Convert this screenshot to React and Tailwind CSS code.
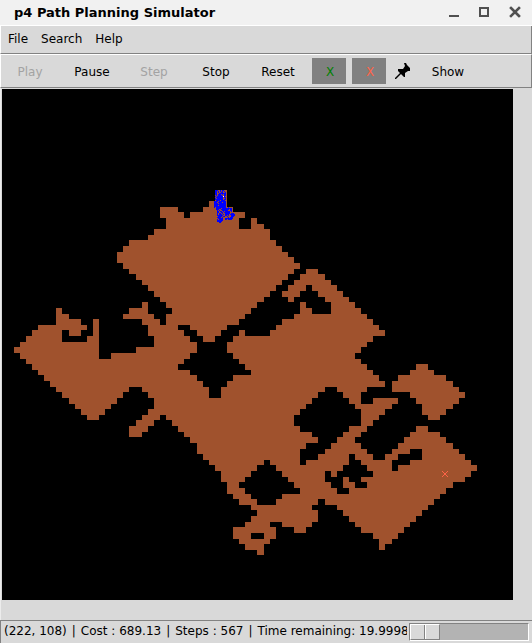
import React from "react";

// Free-cell runs of the map: [row, start, end, start, end, ...], end exclusive.
const RUNS = [
  [18, 35, 37], [19, 35, 37], [20, 34, 37], [21, 26, 29, 33, 38],
  [22, 26, 30, 31, 40], [23, 27, 39, 41, 42], [24, 27, 39, 41, 43],
  [25, 25, 44], [26, 24, 44], [27, 21, 45], [28, 20, 46], [29, 19, 47],
  [30, 19, 48], [31, 20, 49], [32, 21, 48, 50, 52], [33, 22, 47, 49, 53],
  [34, 23, 46, 48, 54], [35, 24, 45, 47, 50, 51, 55],
  [36, 25, 44, 46, 49, 52, 56], [37, 26, 43, 47, 48, 53, 57],
  [38, 23, 24, 27, 42, 49, 50, 54, 58], [39, 21, 24, 28, 41, 49, 51, 54, 59],
  [39, 9, 10], [40, 9, 11, 20, 25, 27, 40, 48, 60],
  [41, 9, 13, 15, 16, 23, 26, 27, 39, 46, 61],
  [42, 6, 14, 15, 16, 24, 29, 31, 37, 45, 62],
  [43, 5, 10, 11, 13, 15, 16, 24, 30, 32, 36, 39, 40, 44, 63],
  [44, 4, 10, 14, 16, 25, 31, 33, 35, 38, 61],
  [45, 3, 16, 25, 32, 37, 60], [46, 2, 16, 22, 32, 37, 59],
  [47, 3, 16, 18, 31, 38, 58], [48, 4, 30, 39, 59], [49, 5, 29, 40, 60, 68, 70],
  [50, 6, 31, 41, 61, 67, 71], [51, 7, 32, 38, 62, 65, 73],
  [52, 8, 33, 37, 63, 64, 74], [53, 9, 21, 23, 34, 36, 53, 55, 60, 64, 75],
  [54, 10, 20, 24, 34, 36, 52, 56, 59, 67, 76],
  [55, 11, 19, 25, 51, 57, 59, 61, 65, 68, 75],
  [56, 12, 18, 25, 50, 58, 64, 69, 74], [57, 13, 17, 24, 49, 59, 63, 69, 73],
  [58, 14, 16, 23, 26, 27, 48, 59, 62, 70, 72], [59, 22, 25, 28, 48, 59, 61],
  [60, 21, 24, 29, 49, 57, 60, 68, 70], [61, 21, 23, 30, 51, 56, 59, 67, 72],
  [62, 31, 52, 55, 58, 66, 73], [63, 32, 50, 54, 59, 65, 74],
  [64, 32, 49, 53, 60, 64, 67, 69, 75],
  [65, 33, 49, 52, 57, 58, 61, 63, 65, 69, 76],
  [66, 34, 43, 44, 49, 50, 57, 59, 64, 67, 77],
  [67, 35, 42, 45, 56, 60, 64, 65, 78], [68, 36, 41, 46, 53, 54, 55, 61, 77],
  [69, 36, 40, 47, 53, 56, 57, 59, 76], [70, 37, 39, 48, 54, 56, 58, 60, 74],
  [71, 37, 40, 49, 55, 57, 73], [72, 38, 41, 46, 72], [73, 39, 42, 45, 52, 53, 71],
  [74, 41, 51, 55, 70], [75, 42, 52, 56, 69], [76, 41, 52, 57, 68],
  [77, 40, 44, 46, 51, 58, 67], [78, 38, 45, 48, 50, 59, 66],
  [79, 38, 41, 43, 45, 61, 65], [80, 39, 44, 62, 64], [81, 40, 43, 62, 63],
  [82, 42, 43],
];

const colX = (c) => Math.floor(2 + c * 6.095) - 2;
const rowY = (r) => Math.floor(89 + r * 5.6264) - 89;

function mapPath() {
  let d = "";
  for (const [row, ...ends] of RUNS) {
    const y = rowY(row);
    const h = rowY(row + 1) - y;
    for (let i = 0; i < ends.length; i += 2) {
      const x = colX(ends[i]);
      const w = colX(ends[i + 1]) - x;
      d += `M${x} ${y}h${w}v${h}h${-w}z`;
    }
  }
  return d;
}

// Cells already expanded by the search, one character per pixel.
const VISITED = [
  "..###..#.##...........",
  "..##.#.#.#.#..........",
  "..##.#..##..#.........",
  "..##..#######.........",
  "..##.###.#.##.........",
  "...#.####..##.........",
  "..#.######.#..........",
  "...#######.##.........",
  "..#.######..#.........",
  "..########.##.........",
  "...####.####..........",
  ".####.#######.........",
  ".###.####.###.........",
  ".####.#######.........",
  ".############.........",
  ".####.#######.........",
  ".############.........",
  ".#.##########..#......",
  "...#####.##########...",
  "...###..########.##...",
  "....#.#..######..##...",
  "....##.##.#.#####.#...",
  "....##..##.######.....",
  "....#.##.#..#####.###.",
  "....#.###.#.####.#####",
  "....######..##.#..####",
  ".....####.##..#...###.",
  "....####.#.....#.###..",
  ".....#####..########..",
  "....#.####..##.####...",
  "....######............",
  "....#####.............",
  "......##..............",
];

function visitedPath() {
  let d = "";
  VISITED.forEach((line, y) => {
    [...line].forEach((c, x) => {
      if (c === "#") d += `M${211 + x} ${101 + y}h1v1h-1z`;
    });
  });
  return d;
}

function MapCanvas() {
  return (
    <svg
      width="511"
      height="511"
      viewBox="0 0 511 511"
      shapeRendering="crispEdges"
      className="block shrink-0 bg-black"
      role="img"
      aria-label="Map"
    >
      <path d={mapPath()} fill="#a0522d" />
      <path d={visitedPath()} fill="#0000ff" />
      <rect x="221" y="107" width="1" height="1" fill="#ffffff" />
      <path
        d="M440 382l6 6M446 382l-6 6"
        stroke="#ff6347"
        strokeWidth="1"
        fill="none"
      />
    </svg>
  );
}

function ToolButton({ children, disabled }) {
  return (
    <button
      type="button"
      disabled={disabled}
      className="h-[26px] w-[58px] pt-0.5 text-center disabled:text-[#a3a3a3]"
    >
      {children}
    </button>
  );
}

function TitleBar() {
  return (
    <header className="flex h-[26px] items-center justify-between border-b border-white bg-[#f1f1f1] pr-2.5 pl-3.5">
      <h1 className="text-[13px] font-bold">p4 Path Planning Simulator</h1>
      <div className="flex gap-4 text-[#505050]">
        <button type="button" aria-label="Minimize">
          <svg width="14" height="14" shapeRendering="crispEdges" className="block">
            <path d="M1 9h10v2h-10z" fill="currentColor" />
          </svg>
        </button>
        <button type="button" aria-label="Maximize">
          <svg width="14" height="14" shapeRendering="crispEdges" className="block">
            <path d="M2 2h8v8h-8z" fill="none" stroke="currentColor" strokeWidth="2" />
          </svg>
        </button>
        <button type="button" aria-label="Close">
          <svg width="14" height="14" className="block">
            <path d="M3 2l8 8M11 2l-8 8" stroke="currentColor" strokeWidth="2.6" strokeLinecap="square" />
          </svg>
        </button>
      </div>
    </header>
  );
}

export default function App() {
  return (
    <div className="flex min-h-screen flex-col bg-[#d9d9d9] font-['DejaVu_Sans',sans-serif] text-[12px] leading-4 text-black">
      <TitleBar />
      <nav className="flex h-7 items-center gap-[13px] border-r border-b border-l border-r-[#828282] border-b-[#828282] border-l-white pb-0.5 pl-[7px]">
        <button type="button">File</button>
        <button type="button">Search</button>
        <button type="button">Help</button>
      </nav>
      <div className="flex h-[34px] items-center gap-1 border border-t-white border-r-[#828282] border-b-[#828282] border-l-white">
        <ToolButton disabled>Play</ToolButton>
        <ToolButton>Pause</ToolButton>
        <ToolButton disabled>Step</ToolButton>
        <ToolButton>Stop</ToolButton>
        <ToolButton>Reset</ToolButton>
        <div className="flex gap-1.5 px-px">
          <button type="button" className="h-[26px] w-[34px] bg-[#808080] pt-0.5 pl-0.5 text-[#008000]">
            X
          </button>
          <button type="button" className="h-[26px] w-[34px] bg-[#808080] pt-0.5 pl-0.5 text-[#ff6347]">
            X
          </button>
        </div>
        <button type="button" aria-label="Pin" className="px-1">
          <svg width="16" height="16" className="block">
            <path
              d="M9 0h2l1 2l3 3v3h-2l-3 2v4h-1l-6-6v-2h5l2-3z"
              fill="#000000"
            />
            <path d="M0 16l6-6" stroke="#000000" strokeWidth="1.4" />
          </svg>
        </button>
        <ToolButton>Show</ToolButton>
      </div>
      <main className="grow border-l border-l-[#ececec] pt-px pb-5 pl-px">
        <MapCanvas />
      </main>
      <footer className="flex h-[23px] border-t border-l border-[#828282]">
        <div className="flex min-w-0 flex-1 gap-[5px] overflow-hidden pt-0.5 pl-[3px] whitespace-nowrap">
          <span>(222, 108)</span>
          <span>|</span>
          <span>Cost : 689.13</span>
          <span>|</span>
          <span>Steps : 567</span>
          <span>|</span>
          <span>Time remaining: 19.9998</span>
        </div>
        <input
          type="range"
          aria-label="Speed"
          min="0"
          max="100"
          defaultValue="0"
          className="mr-[3px] ml-0.5 h-[18px] w-[120px] appearance-none self-center border border-t-[#828282] border-r-white border-b-white border-l-[#828282] bg-[#b3b3b3] [&::-webkit-slider-thumb]:h-4 [&::-webkit-slider-thumb]:w-[30px] [&::-webkit-slider-thumb]:appearance-none [&::-webkit-slider-thumb]:border [&::-webkit-slider-thumb]:border-t-white [&::-webkit-slider-thumb]:border-r-[#828282] [&::-webkit-slider-thumb]:border-b-[#828282] [&::-webkit-slider-thumb]:border-l-white [&::-webkit-slider-thumb]:bg-[linear-gradient(90deg,#d9d9d9_13px,#828282_13px,#828282_14px,#ffffff_14px,#ffffff_15px,#d9d9d9_15px)]"
        />
      </footer>
    </div>
  );
}
